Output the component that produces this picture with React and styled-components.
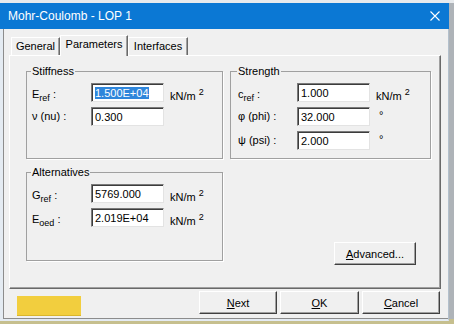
import React from 'react';
import styled, { createGlobalStyle } from 'styled-components';

const Global = createGlobalStyle`
    html, body { margin: 0; }
    body {
        width: 454px;
        height: 324px;
        overflow: hidden;
        background: linear-gradient(to bottom, #e7eaed 0, #e7eaed 3px, #aeb3b8 3px, #aeb3b8 319px, #c6bf8e 319px);
        font-family: "Liberation Sans", Arial, sans-serif;
        font-size: 11px;
        color: #000;
    }
`

const Window = styled.div`
    width: 449px;
    margin-top: 3px;
`

const TitleBar = styled.div`
    height: 26px;
    background: #0b78d4;
    color: #fff;
    display: flex;
    align-items: center;
    justify-content: space-between;
    padding: 0 9px 0 8px;
    font-size: 12px;
`

const Frame = styled.div`
    background: #f0f0f0;
    border-left: 3px solid #e4ebf2;
    border-right: 1px solid #b3c0cc;
    border-bottom: 2px solid #e4ebf2;
    box-shadow: inset 1px 0 0 #8c8c8c, inset 0 -1px 0 #8c8c8c;
    padding: 6px 7px 0 6px;
`

const TabStrip = styled.div`
    display: flex;
    align-items: flex-end;
    height: 20px;
    padding-left: 2px;
`

const Tab = styled.div`
    box-sizing: border-box;
    width: ${p => p.$w}px;
    height: ${p => (p.$active ? 21 : 18)}px;
    margin-bottom: ${p => (p.$active ? -1 : 0)}px;
    position: relative;
    z-index: ${p => (p.$active ? 1 : 0)};
    background: #f0f0f0;
    border-top: 1px solid #fff;
    border-left: 1px solid #fff;
    border-right: 1px solid #696969;
    box-shadow: inset -1px 0 0 #a0a0a0;
    text-align: center;
    line-height: ${p => (p.$active ? 17 : 16)}px;
`

const Panel = styled.div`
    box-sizing: border-box;
    height: 234px;
    border: 1px solid;
    border-color: #fff #696969 #696969 #fff;
    box-shadow: inset -1px -1px 0 #a0a0a0;
    padding: 9px 9px 0 16px;
`

const Grid = styled.div`
    display: grid;
    grid-template-columns: 197px 201px;
    column-gap: 7px;
    row-gap: 7px;
`

const Group = styled.fieldset`
    margin: 0;
    min-width: 0;
    border: 1px solid #a0a0a0;
    box-shadow: 1px 1px 0 #fff;
    padding: 5px 4px ${p => p.$bottom}px ${p => p.$left}px;
`

const Legend = styled.legend`
    padding: 0 1px;
    margin-left: -1px;
    line-height: 13px;
`

const Fields = styled.div`
    display: grid;
    row-gap: 5px;
`

const Row = styled.div`
    display: grid;
    grid-template-columns: 53px 73px auto;
    column-gap: 6px;
    align-items: end;
`

const Label = styled.div`
    align-self: center;
    line-height: 13px;
    padding-top: ${p => (p.$low ? 3 : 0)}px;
`

const Sub = styled.sub`
    font-size: 9px;
    vertical-align: -3px;
    line-height: 0;
`

const Field = styled.div`
    box-sizing: border-box;
    height: 19px;
    background: #fff;
    border: 1px solid;
    border-color: #7a7a7a #e3e3e3 #e3e3e3 #7a7a7a;
    box-shadow: inset 1px 1px 0 #3c3c3c;
    padding: 2px 0 0 3px;
    line-height: 14px;
    white-space: nowrap;
`

const Selected = styled.span`
    background: #2f86db;
    color: #fff;
`

const Unit = styled.div`
    align-self: ${p => (p.$center ? 'center' : 'end')};
    margin-left: ${p => (p.$center ? 3 : 0)}px;
    line-height: 13px;
    margin-bottom: ${p => (p.$center ? 2 : -1)}px;
    white-space: nowrap;
`

const Sup = styled.sup`
    font-size: 9px;
    vertical-align: 5px;
    line-height: 0;
`

const Button = styled.button`
    box-sizing: border-box;
    width: ${p => p.$w}px;
    height: 23px;
    padding: 0;
    background: #f0f0f0;
    border: 1px solid;
    border-color: #fff #404040 #404040 #fff;
    box-shadow: inset -1px -1px 0 #a0a0a0;
    font-family: "Liberation Sans", Arial, sans-serif;
    font-size: 11px;
    color: #000;
`

const AdvancedButton = styled(Button)`
    grid-column: 2;
    justify-self: end;
    align-self: end;
    margin-right: 15px;
    margin-bottom: -4px;
`

const Footer = styled.div`
    height: 28px;
    display: flex;
    justify-content: space-between;
    align-items: flex-start;
    padding: 2px 1px 0 8px;
`

const Swatch = styled.div`
    width: 64px;
    height: 20px;
    margin-top: 5px;
    background: #f2ce3e;
    box-shadow: inset 0 -1px 0 #d9b52c;
`

const Buttons = styled.div`
    display: flex;
    gap: 3px;
`

const unitKN = <>kN/m <Sup>2</Sup></>

const Close = () => (
    <svg width="10" height="10" viewBox="0 0 10 10">
        <path d="M0.5 0.5 L9.5 9.5 M9.5 0.5 L0.5 9.5" stroke="#fff" strokeWidth="1.1" />
    </svg>
)

const App = () => (
    <>
        <Global />
        <Window>
            <TitleBar>
                <span>Mohr-Coulomb - LOP 1</span>
                <Close />
            </TitleBar>
            <Frame>
                <TabStrip>
                    <Tab $w={49}>General</Tab>
                    <Tab $w={68} $active>Parameters</Tab>
                    <Tab $w={60}>Interfaces</Tab>
                </TabStrip>
                <Panel>
                    <Grid>
                        <Group $left={5} $bottom={8}>
                            <Legend>Stiffness</Legend>
                            <Fields>
                                <Row>
                                    <Label $low>E<Sub>ref</Sub> :</Label>
                                    <Field><Selected>1.500E+04</Selected></Field>
                                    <Unit>{unitKN}</Unit>
                                </Row>
                                <Row>
                                    <Label>ν (nu) :</Label>
                                    <Field>0.300</Field>
                                </Row>
                            </Fields>
                        </Group>
                        <Group $left={7} $bottom={8}>
                            <Legend>Strength</Legend>
                            <Fields>
                                <Row>
                                    <Label $low>c<Sub>ref</Sub> :</Label>
                                    <Field>1.000</Field>
                                    <Unit>{unitKN}</Unit>
                                </Row>
                                <Row>
                                    <Label>φ (phi) :</Label>
                                    <Field>32.000</Field>
                                    <Unit $center>°</Unit>
                                </Row>
                                <Row>
                                    <Label>ψ (psi) :</Label>
                                    <Field>2.000</Field>
                                    <Unit $center>°</Unit>
                                </Row>
                            </Fields>
                        </Group>
                        <Group $left={5} $bottom={33}>
                            <Legend>Alternatives</Legend>
                            <Fields>
                                <Row>
                                    <Label $low>G<Sub>ref</Sub> :</Label>
                                    <Field>5769.000</Field>
                                    <Unit>{unitKN}</Unit>
                                </Row>
                                <Row>
                                    <Label $low>E<Sub>oed</Sub> :</Label>
                                    <Field>2.019E+04</Field>
                                    <Unit>{unitKN}</Unit>
                                </Row>
                            </Fields>
                        </Group>
                        <AdvancedButton $w={82}><u>A</u>dvanced...</AdvancedButton>
                    </Grid>
                </Panel>
                <Footer>
                    <Swatch />
                    <Buttons>
                        <Button $w={78}><u>N</u>ext</Button>
                        <Button $w={79}><u>O</u>K</Button>
                        <Button $w={78}><u>C</u>ancel</Button>
                    </Buttons>
                </Footer>
            </Frame>
        </Window>
    </>
)

export default App;
